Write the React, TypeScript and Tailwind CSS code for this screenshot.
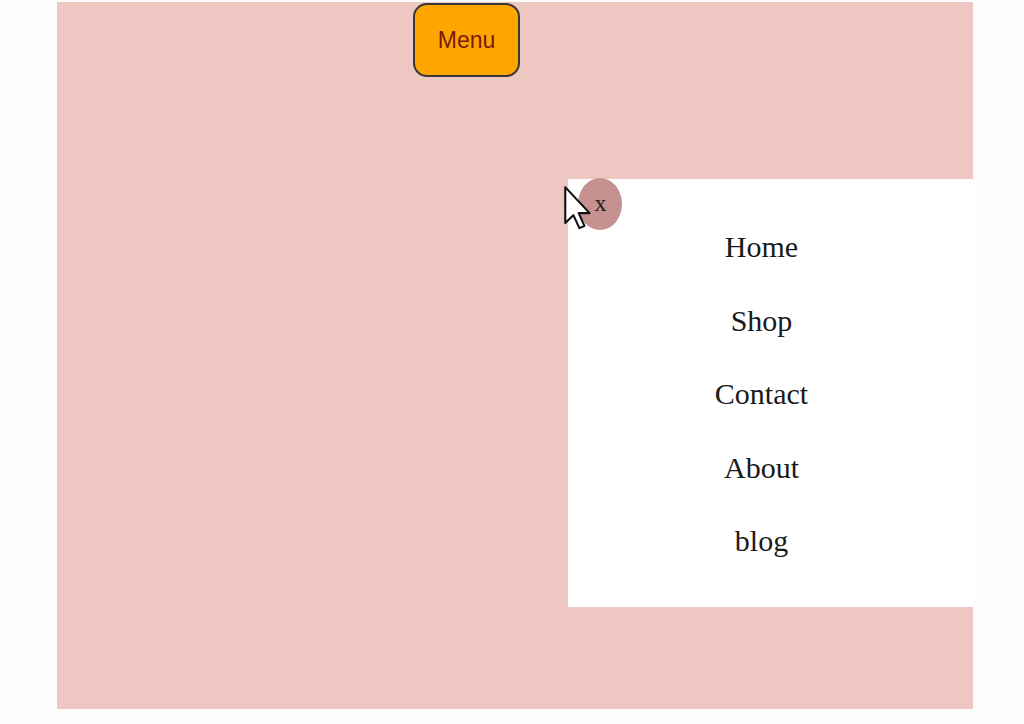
const links = ["Home", "Shop", "Contact", "About", "blog"];

function Cursor() {
  return (
    <svg width="30" height="44" viewBox="0 0 12 19" className="absolute left-[-5px] top-[7px] z-20">
      <path d="M0.5 0.5 L0.5 16 L4 12.6 L6.6 18.2 L8.8 17.2 L6.3 11.7 L11 11.7 Z" fill="#fff" stroke="#111" strokeWidth="0.9" strokeLinejoin="round" />
    </svg>
  );
}

export default function App() {
  return (
    <div className="w-[1024px] h-[724px] bg-[#fdfdfd] pt-[2px] pl-[57px]" style={{ fontFamily: "'Liberation Serif', serif" }}>
      <div className="w-[916px] h-[707px] bg-[#eec6c2] flex flex-col">
        <div className="pl-[356px] pt-[1px]">
          <button className="w-[107px] h-[74px] bg-[#ffa500] border-2 border-[#383838] rounded-[14px] text-[23px] text-[#7a1a08]" style={{ fontFamily: "'Liberation Sans', Arial, sans-serif" }}>
            Menu
          </button>
        </div>
        <nav className="relative self-end mt-[102px] w-[405px] h-[428px] bg-white flex flex-col items-center pt-[51px] pr-[18px] gap-[39.5px]">
          <Cursor />
          <span className="absolute left-[10px] top-[-1px] w-[44px] h-[52px] rounded-[50%] bg-[#c5928f] flex items-center justify-center pl-[1px] pb-[3px] text-[24px] leading-none text-[#2a1a1a]">
            x
          </span>
          {links.map((l) => (
            <a key={l} className="text-[30px] leading-[34px] text-[#1a1a1a]">
              {l}
            </a>
          ))}
        </nav>
      </div>
    </div>
  );
}
